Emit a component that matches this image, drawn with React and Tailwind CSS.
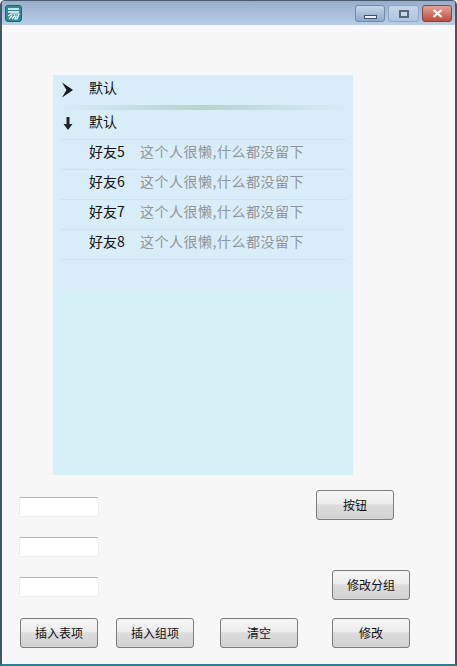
const friends = ["好友5", "好友6", "好友7", "好友8"];

function WinButton({ children, className }) {
  return (
    <button
      className={`h-[17px] flex items-center justify-center rounded-[3px] border ${className}`}
    >
      {children}
    </button>
  );
}

function ActionButton({ label, className = "" }) {
  return (
    <button
      className={`w-[78px] h-[30px] shrink-0 rounded-[3px] border border-[#7c7c7c] bg-[linear-gradient(to_bottom,#f6f6f6_0%,#ececec_45%,#dcdcdc_50%,#d2d2d2_100%)] text-[12px] text-[#111] ${className}`}
    >
      {label}
    </button>
  );
}

function Field({ className = "" }) {
  return (
    <div className={`w-[80px] h-[20px] shrink-0 rounded-[2px] bg-white border border-[#ececec] border-t-[#b4b4b4] ${className}`} />
  );
}

function FriendRow({ name }) {
  return (
    <div className="h-[30px] mx-[7px] pl-[29px] pb-[6px] flex items-center border-b border-[#cfe3ee]">
      <span className="w-[51px] text-[14px] text-[#111]">{name}</span>
      <span className="text-[14px] tracking-[0.5px] text-[#8f9498]">这个人很懒,什么都没留下</span>
    </div>
  );
}

export default function App() {
  return (
    <div
      className="w-[457px] h-[666px] flex flex-col overflow-hidden rounded-t-[5px] border-x-2 border-b-2 border-x-[#3d5a66] border-b-[#2f7f94] bg-[#f7f7f7]"
      style={{ fontFamily: '"Noto Sans CJK SC", "Liberation Sans", sans-serif' }}
    >
      {/* title bar */}
      <div className="h-[25px] shrink-0 flex items-start justify-between pl-[3px] pr-[3px] border-t border-[#4a5a6a] bg-[linear-gradient(to_bottom,#98adc9,#b7cee9)]">
        <svg width="17" height="17" viewBox="0 0 17 17" className="mt-[4px]">
          <rect x="0.5" y="0.5" width="16" height="16" rx="2.5" fill="#2f8a98" stroke="#1d6674" />
          <path d="M3 4h11M3 7h11" stroke="#fff" strokeWidth="1.4" />
          <path d="M3 11l3-2h8l-2 5h-2l1.5-3.5M7 10.5l-3 3.5M10 10.5l-3 3.5" stroke="#fff" strokeWidth="1.2" fill="none" />
        </svg>
        <div className="flex gap-[3px] mt-[4px]">
          <WinButton className="w-[30px] border-[#7189a6] bg-[linear-gradient(to_bottom,#c5d6ea,#8fa9c8)]">
            <span className="w-[13px] h-[4px] mt-[6px] bg-[#eef2f6] border border-[#3f5166]" />
          </WinButton>
          <WinButton className="w-[31px] border-[#8ea5c0] bg-[linear-gradient(to_bottom,#c5d6ea,#aec4de)]">
            <span className="w-[10px] h-[8px] bg-[#c9d7e6] border-2 border-[#56677c]" />
          </WinButton>
          <WinButton className="w-[30px] border-[#7a4a45] bg-[linear-gradient(to_bottom,#e0a59a,#c24a38)]">
            <svg width="11" height="9" viewBox="0 0 11 9">
              <path d="M1.5 1l8 7M9.5 1l-8 7" stroke="#fff" strokeWidth="2.2" />
            </svg>
          </WinButton>
        </div>
      </div>

      {/* friend list */}
      <div className="w-[300px] h-[400px] shrink-0 ml-[51px] mt-[50px] bg-[linear-gradient(to_bottom,#d9edf9_0%,#d9edf9_53.5%,#d5eff6_54%,#d5eff6_100%)]">
        <div className="h-[30px] pb-[6px] flex items-center">
          <svg width="14" height="16" viewBox="0 0 14 16" className="ml-[8px] mt-[5px]">
            <path d="M1 0.5l11 7.5-11 7.5 4.5-7.5z" fill="#15191c" />
          </svg>
          <span className="ml-[14px] text-[14px] text-[#111]">默认</span>
        </div>
        <div className="h-[5px] bg-[linear-gradient(to_right,#d9edf9,#b5d3d0_50%,#d9edf9)]" />
        <div className="h-[30px] mx-[7px] pb-[6px] flex items-center border-b border-[#cfe3ee]">
          <svg width="10" height="13" viewBox="0 0 10 13" className="ml-[3px] mt-[3px]">
            <path d="M3.5 0h3v7h3L5 13 .5 7h3z" fill="#22262a" />
          </svg>
          <span className="ml-[16px] text-[14px] text-[#111]">默认</span>
        </div>
        {friends.map((name) => (
          <FriendRow key={name} name={name} />
        ))}
      </div>

      {/* form controls */}
      <div className="flex flex-col pl-[17px] mt-[15px]">
        <div className="h-[30px] flex items-center">
          <Field className="mt-[4px]" />
          <ActionButton label="按钮" className="ml-[217px]" />
        </div>
        <div className="h-[20px] mt-[17px] flex items-center">
          <Field />
        </div>
        <div className="h-[30px] mt-[13px] flex items-center">
          <Field className="mt-[4px]" />
          <ActionButton label="修改分组" className="ml-[233px]" />
        </div>
        <div className="flex mt-[18px] pl-[1px]">
          <ActionButton label="插入表项" />
          <ActionButton label="插入组项" className="ml-[18px]" />
          <ActionButton label="清空" className="ml-[26px]" />
          <ActionButton label="修改" className="ml-[34px]" />
        </div>
      </div>
    </div>
  );
}
